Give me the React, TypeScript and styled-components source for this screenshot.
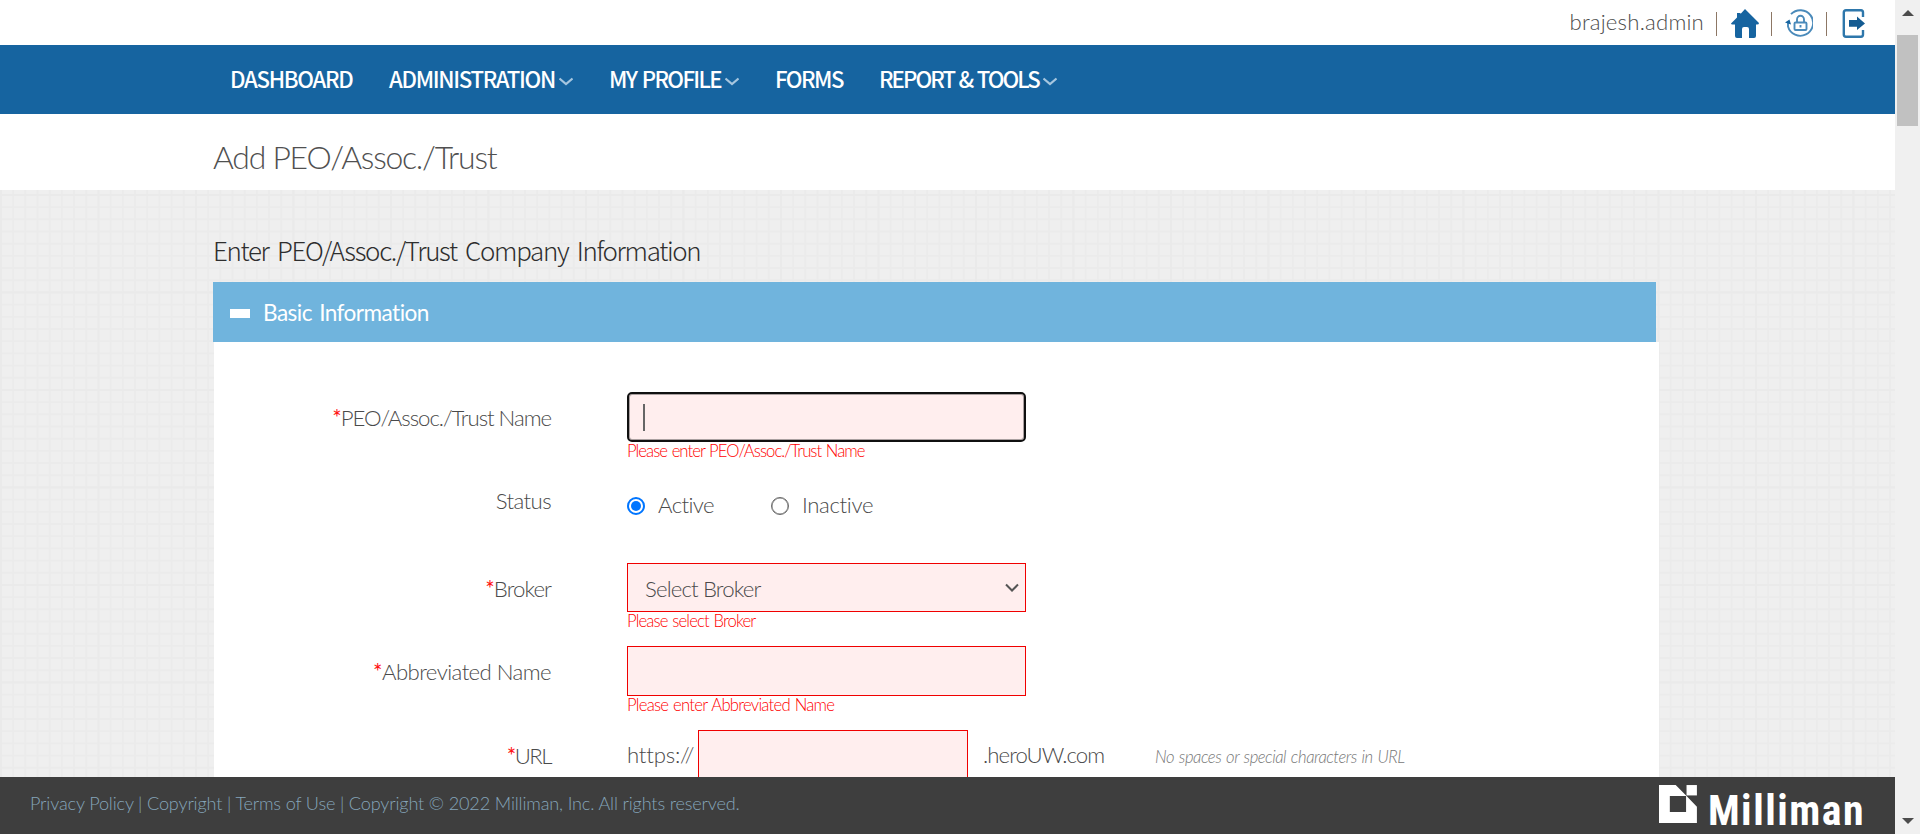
import React from "react";
import styled, { createGlobalStyle } from "styled-components";

const light = `"Lato", "Open Sans", sans-serif`;
const humanist = `"Noto Sans CJK SC", "Open Sans", sans-serif`;

const GlobalStyle = createGlobalStyle`
  *, *::before, *::after { box-sizing: border-box; }
  html, body { margin: 0; padding: 0; overflow: hidden; }
  body { background: #fff; color: #666; font-family: ${light}; font-weight: 300; }
`;

const Window = styled.div`
  display: grid;
  grid-template-columns: 1fr 25px;
  height: 834px;
  overflow: hidden;
`;

const Page = styled.div`
  display: grid;
  grid-template-rows: 45px 69px 76px 587px 57px;
  min-width: 0;
`;

const Tracked = styled.span<{ $track?: number; $word?: number }>`
  letter-spacing: ${(p) => p.$track ?? 0}px;
  word-spacing: ${(p) => p.$word ?? 0}px;
  white-space: nowrap;
`;

const UserBar = styled.header`
  display: flex;
  justify-content: flex-end;
  align-items: flex-start;
  padding: 9px 28px 0 0;
  background: #fff;
`;

const UserName = styled(Tracked)`
  font-size: 22.2px;
  line-height: 26px;
  color: #4c4c4c;
  margin-right: 12px;
`;

const Divider = styled.i<{ $gap: number }>`
  width: 1px;
  height: 24px;
  margin: 3px ${(p) => p.$gap}px 0 0;
  background: #8d7765;
`;

const IconLink = styled.a<{ $gap: number }>`
  display: flex;
  margin-right: ${(p) => p.$gap}px;
`;

const Nav = styled.nav`
  display: flex;
  align-items: center;
  padding: 0 0 3px 230px;
  background: #1664a0;
`;

const NavItem = styled.a<{ $width: number }>`
  display: flex;
  align-items: center;
  gap: 4px;
  width: ${(p) => p.$width}px;
  font: 500 22.2px/32px ${humanist};
  color: #fff;
`;

const TitleBand = styled.div`
  padding: 6px 0 0 213px;
  background: #fff;
`;

const Title = styled.h1`
  margin: 0;
  font-size: 31.9px;
  font-weight: 300;
  line-height: 75px;
  height: 70px;
  color: #505050;
`;

const Content = styled.main`
  overflow: hidden;
  padding: 42px 236px 0 213px;
  background-color: #efefef;
  background-image:
    linear-gradient(90deg, #eaeaea 2px, transparent 2px),
    linear-gradient(180deg, #eaeaea 2px, transparent 2px),
    linear-gradient(90deg, #ebebeb 1.5px, transparent 1.5px),
    linear-gradient(180deg, #ebebeb 1.5px, transparent 1.5px);
  background-size: 97.5px 97.5px, 97.5px 97.5px, 12.19px 12.19px, 12.19px 12.19px;
  background-position: 0 0, 0 4px, 0 0, 0 4px;
`;

const SectionHeading = styled.h2`
  margin: 0;
  height: 50px;
  font: 300 25.9px/36px ${humanist};
  color: #2e2e2e;
`;

const PanelHeader = styled.div`
  display: flex;
  align-items: center;
  gap: 13px;
  width: 1443px;
  height: 60px;
  padding-left: 17px;
  background: #70b4dd;
  color: #fff;
  font-size: 22.6px;
  font-weight: 400;
`;

const MinusMark = styled.i`
  width: 20px;
  height: 9px;
  margin-top: 3px;
  background: #fff;
`;

const PanelBody = styled.section`
  width: 1445px;
  height: 500px;
  margin-left: 1px;
  padding-top: 50px;
  background: #fff;
`;

const FormRow = styled.div<{ $height: number }>`
  display: grid;
  grid-template-columns: 337px 1fr;
  column-gap: 76px;
  height: ${(p) => p.$height}px;
`;

const Label = styled.label`
  justify-self: end;
  font-size: 22.2px;
  line-height: 52px;
  color: #4a4a4a;
`;

const Required = styled.span`
  color: #ff1414;
  font-weight: 400;
`;

const Field = styled.div`
  display: flex;
  flex-direction: column;
  align-items: flex-start;
`;

const TextBox = styled.div<{ $width?: number; $focused?: boolean }>`
  display: flex;
  align-items: center;
  width: ${(p) => p.$width ?? 399}px;
  height: 50px;
  padding-left: 14px;
  background: #ffeeee;
  border: ${(p) => (p.$focused ? "2px solid #101010" : "1px solid #f00000")};
  border-radius: ${(p) => (p.$focused ? 5 : 0)}px;
  box-shadow: ${(p) => (p.$focused ? "inset 0 0 0 1px #aaa0a0" : "none")};
`;

const Caret = styled.i`
  width: 2px;
  height: 27px;
  background: #666;
`;

const SelectBox = styled(TextBox)`
  justify-content: space-between;
  height: 49px;
  padding: 0 6px 0 17px;
  font-size: 22.2px;
  color: #4a4a4a;
`;

const SelectText = styled(Tracked)`
  padding-top: 2px;
`;

const ErrorText = styled(Tracked)`
  font-size: 16.7px;
  line-height: 19px;
  font-weight: 300;
  color: #ff0000;
`;

const Choices = styled.div`
  display: flex;
  align-items: center;
  height: 50px;
  margin-top: 6px;
  font-size: 22.2px;
  color: #4a4a4a;
`;

const Choice = styled.span<{ $width: number }>`
  display: flex;
  align-items: center;
  gap: 13px;
  width: ${(p) => p.$width}px;
`;

const ChoiceText = styled(Tracked)`
  padding-bottom: 4px;
`;

const Radio = styled.i<{ $checked?: boolean }>`
  width: 18px;
  height: 18px;
  border: ${(p) => (p.$checked ? "2px solid #0075ff" : "1px solid #6a6a6a")};
  box-shadow: ${(p) => (p.$checked ? "none" : "inset 0 0 0 0.5px #767676")};
  border-radius: 50%;
  padding: 2px;
  background: ${(p) => (p.$checked ? "#0075ff" : "#fff")} content-box;
`;

const UrlLine = styled.div`
  display: flex;
  align-items: flex-start;
  font-size: 22.2px;
  line-height: 49px;
  color: #4a4a4a;
`;

const Scheme = styled(Tracked)`
  width: 71px;
`;

const Domain = styled(Tracked)`
  width: 171px;
  padding-left: 15px;
`;

const Hint = styled(Tracked)`
  margin-left: 16px;
  padding-top: 3px;
  font-size: 16.7px;
  font-style: italic;
  font-weight: 300;
  color: #777;
`;

const Footer = styled.footer`
  display: flex;
  justify-content: space-between;
  background: #3e3e3e;
  padding: 0 30px;
`;

const Legal = styled(Tracked)`
  font-size: 18.1px;
  line-height: 53px;
  font-weight: 300;
  color: #85a5ba;
`;

const Brand = styled.div`
  display: flex;
  gap: 11px;
  width: 206px;
  padding-top: 6px;
  color: #fff;
`;

const BrandName = styled.span`
  font: 700 41.8px/42px "Roboto", sans-serif;
  font-stretch: 75%;
  letter-spacing: 1.5px;
  padding-top: 7px;
`;

const ScrollTrack = styled.aside`
  display: flex;
  flex-direction: column;
  align-items: center;
  background: #f0f0f0;
`;

const ScrollThumb = styled.i`
  width: 21px;
  height: 91px;
  margin: 19px 0 auto;
  background: #c1c1c1;
`;

const ScrollArrow = styled.i<{ $down?: boolean }>`
  margin: ${(p) => (p.$down ? "0 0 10px" : "10px 0 0")};
  border: 6px solid transparent;
  border-width: ${(p) => (p.$down ? "6px 6px 0" : "0 6px 6px")};
  border-top-color: #4c4c4c;
  border-bottom-color: #4c4c4c;
`;

const ChevronIcon = styled.svg`
  margin-top: 6px;
`;

const Chevron = () => (
  <ChevronIcon width="14" height="9" viewBox="0 0 14 9" fill="none">
    <path d="M0.500 1.500 L7 7 L13.500 1.500" stroke="#a6c6df" strokeWidth="2.200" />
  </ChevronIcon>
);

const HomeIcon = () => (
  <svg width="28" height="29" viewBox="0 0 28 29">
    <path d="M14 0 L28 14 Q28 15.5 26 15.5 H25 V27 Q25 29 23 29 H18 V20 Q18 18 16 18 H13 Q11 18 11 20 V29 H6 Q4 29 4 27 V15.5 H1.500 Q0 15.500 0 14.500 L6 8.500 V4 H9.500 V5 Z" fill="#1664a0" />
  </svg>
);

const ResetLockIcon = () => (
  <svg width="28" height="29" viewBox="0 0 28 29" fill="none" stroke="#4a8aba" strokeWidth="1.900">
    <path d="M6 5.200 A12.800 12.800 0 1 1 3 17.500 V14" />
    <path d="M0 13.500 L4.500 10.500 L6 15.500 Z" fill="#1664a0" stroke="none" />
    <rect x="9.500" y="13.500" width="12" height="7.500" rx="1" />
    <path d="M12 13.500 V10.500 A3.500 3.800 0 0 1 19 10.500 V13.500" />
    <path d="M15.500 16 V18.500" />
  </svg>
);

const LogoutIcon = () => (
  <svg width="24" height="29" viewBox="0 0 24 29" fill="none">
    <path d="M21 8 V3.500 Q21 1.300 19 1.300 H4 Q1.800 1.300 1.800 3.500 V25.500 Q1.800 27.700 4 27.700 H19 Q21 27.700 21 25.500 V21" stroke="#2e77ab" strokeWidth="2.400" />
    <path d="M7 11 H15 V7.500 L23 14.500 L15 21 V17.800 H7 Z" fill="#135b92" />
  </svg>
);

const BrandMark = () => (
  <svg width="42" height="42" viewBox="0 0 42 42" fill="#fff">
    <path fillRule="evenodd" d="M0 0 H18.500 L30 11.500 L42 24 V42 H0 Z M12 12 V30 H30 V12 Z" />
    <path d="M30.500 0 H42 V11.500 H30.500 Z" />
  </svg>
);

const SelectArrow = () => (
  <svg width="14" height="10" viewBox="0 0 14 10" fill="none">
    <path d="M1 1.500 L7 7.500 L13 1.500" stroke="#555" strokeWidth="2" />
  </svg>
);

const navItems = [
  { text: "DASHBOARD", width: 159, track: -1.3 },
  { text: "ADMINISTRATION", width: 220, track: -1.32, menu: true },
  { text: "MY PROFILE", width: 166, track: -1.65, word: 2, menu: true },
  { text: "FORMS", width: 104, track: -1.5 },
  { text: "REPORT & TOOLS", width: 200, track: -1.95, word: 1.5, menu: true },
];

export default function App() {
  return (
    <>
      <GlobalStyle />
      <Window>
        <Page>
          <UserBar>
            <UserName $track={0.2}>brajesh.admin</UserName>
            <Divider $gap={14} />
            <IconLink $gap={12}><HomeIcon /></IconLink>
            <Divider $gap={13} />
            <IconLink $gap={13}><ResetLockIcon /></IconLink>
            <Divider $gap={15} />
            <IconLink $gap={1}><LogoutIcon /></IconLink>
          </UserBar>
          <Nav>
            {navItems.map((item) => (
              <NavItem key={item.text} $width={item.width}>
                <Tracked $track={item.track} $word={item.word}>{item.text}</Tracked>
                {item.menu && <Chevron />}
              </NavItem>
            ))}
          </Nav>
          <TitleBand>
            <Title><Tracked $track={-1.23}>Add PEO/Assoc./Trust</Tracked></Title>
          </TitleBand>
          <Content>
            <SectionHeading>
              <Tracked $track={-1.32} $word={4}>Enter PEO/Assoc./Trust Company Information</Tracked>
            </SectionHeading>
            <PanelHeader>
              <MinusMark />
              <Tracked $track={-0.55} $word={2}>Basic Information</Tracked>
            </PanelHeader>
            <PanelBody>
              <FormRow $height={83}>
                <Label><Tracked $track={-1.04}><Required>*</Required>PEO/Assoc./Trust Name</Tracked></Label>
                <Field>
                  <TextBox $focused><Caret /></TextBox>
                  <ErrorText $track={-0.96} $word={1}>Please enter PEO/Assoc./Trust Name</ErrorText>
                </Field>
              </FormRow>
              <FormRow $height={88}>
                <Label><Tracked $track={-0.6}>Status</Tracked></Label>
                <Choices>
                  <Choice $width={144}><Radio $checked /><ChoiceText $track={-0.6}>Active</ChoiceText></Choice>
                  <Choice $width={144}><Radio /><ChoiceText $track={-0.35}>Inactive</ChoiceText></Choice>
                </Choices>
              </FormRow>
              <FormRow $height={83}>
                <Label><Tracked $track={-0.9}><Required>*</Required>Broker</Tracked></Label>
                <Field>
                  <SelectBox>
                    <SelectText $track={-0.85}>Select Broker</SelectText>
                    <SelectArrow />
                  </SelectBox>
                  <ErrorText $track={-0.87} $word={1}>Please select Broker</ErrorText>
                </Field>
              </FormRow>
              <FormRow $height={84}>
                <Label><Tracked $track={-0.57}><Required>*</Required>Abbreviated Name</Tracked></Label>
                <Field>
                  <TextBox />
                  <ErrorText $track={-0.75} $word={1}>Please enter Abbreviated Name</ErrorText>
                </Field>
              </FormRow>
              <FormRow $height={84}>
                <Label><Tracked $track={-1.5}><Required>*</Required>URL</Tracked></Label>
                <UrlLine>
                  <Scheme $track={-0.2}>https://</Scheme>
                  <TextBox $width={270} />
                  <Domain $track={-0.9}>.heroUW.com</Domain>
                  <Hint $track={-0.47} $word={1}>No spaces or special characters in URL</Hint>
                </UrlLine>
              </FormRow>
            </PanelBody>
          </Content>
          <Footer>
            <Legal $track={-0.16}>
              Privacy Policy | Copyright | Terms of Use | Copyright © 2022 Milliman, Inc. All rights reserved.
            </Legal>
            <Brand>
              <BrandMark />
              <BrandName>Milliman</BrandName>
            </Brand>
          </Footer>
        </Page>
        <ScrollTrack>
          <ScrollArrow />
          <ScrollThumb />
          <ScrollArrow $down />
        </ScrollTrack>
      </Window>
    </>
  );
}
